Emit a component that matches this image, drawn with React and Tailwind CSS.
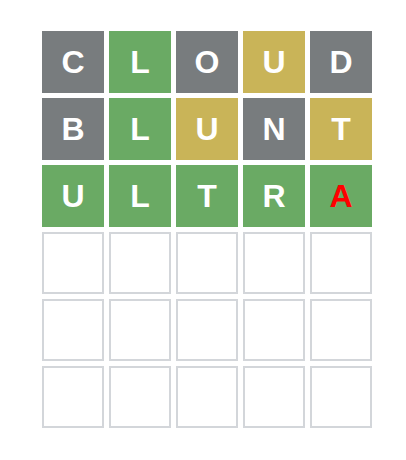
const rows = [
  [
    ['C', 'absent'],
    ['L', 'correct'],
    ['O', 'absent'],
    ['U', 'present'],
    ['D', 'absent'],
  ],
  [
    ['B', 'absent'],
    ['L', 'correct'],
    ['U', 'present'],
    ['N', 'absent'],
    ['T', 'present'],
  ],
  [
    ['U', 'correct'],
    ['L', 'correct'],
    ['T', 'correct'],
    ['R', 'correct'],
    ['A', 'typing'],
  ],
]

const tileStyles = {
  absent: 'bg-[#787c7e] text-white',
  correct: 'bg-[#6aaa64] text-white',
  present: 'bg-[#c9b458] text-white',
  typing: 'bg-[#6aaa64] text-[#ff0000]',
}

function Tile({ letter, state }) {
  if (!state) {
    return <div className="h-[62px] w-[62px] border-2 border-[#d3d6da] bg-white" />
  }
  return (
    <div
      className={`flex h-[62px] w-[62px] items-center justify-center text-[32px] leading-none font-bold ${tileStyles[state]}`}
    >
      {letter}
    </div>
  )
}

export default function App() {
  const board = [...rows]
  while (board.length < 6) board.push([[], [], [], [], []])

  return (
    <div className="h-[460px] w-[406px] bg-white pl-[42px] pt-[31px] font-['Liberation_Sans',Arial,sans-serif]">
      <div className="grid w-[330px] grid-cols-5 gap-[5px]">
        {board.flatMap((row, r) =>
          row.map(([letter, state], c) => (
            <Tile key={`${r}-${c}`} letter={letter} state={state} />
          )),
        )}
      </div>
    </div>
  )
}
